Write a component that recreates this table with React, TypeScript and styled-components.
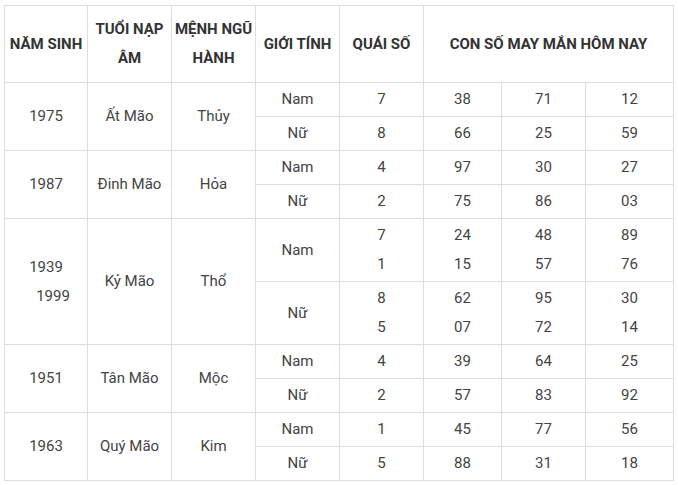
import React from "react";
import styled, { createGlobalStyle } from "styled-components";

const Global = createGlobalStyle`
  html, body { margin: 0; padding: 0; background: #fff; }
  body { font-family: Roboto, "Noto Sans", sans-serif; }
`;

const Wrap = styled.div`
  padding: 5px 0 0 4px;
`;

const Table = styled.table`
  border-collapse: collapse;
  table-layout: fixed;
  width: 669px;
  font-size: 15px;
  line-height: 29px;
  color: #444;
`;

const Col = styled.col<{ $w: number }>`
  width: ${(p) => p.$w}px;
`;

const Row = styled.tr<{ $h: number }>`
  height: ${(p) => p.$h}px;
`;

const Head = styled.th`
  border: 1px solid #ddd;
  padding: 0;
  font-weight: 700;
  color: #333;
  text-align: center;
  vertical-align: middle;
`;

const Cell = styled.td`
  border: 1px solid #ddd;
  padding: 0;
  text-align: center;
  vertical-align: middle;
`;

const Shifted = styled.span`
  display: inline-block;
  padding-left: 14px;
`;

type Sub = { sex: string; q: string[]; n: string[][] };
type Item = { year: React.ReactNode; tuoi: string; menh: string; h: number; subs: Sub[] };

const data: Item[] = [
  {
    year: "1975", tuoi: "Ất Mão", menh: "Thủy", h: 34,
    subs: [
      { sex: "Nam", q: ["7"], n: [["38"], ["71"], ["12"]] },
      { sex: "Nữ", q: ["8"], n: [["66"], ["25"], ["59"]] },
    ],
  },
  {
    year: "1987", tuoi: "Đinh Mão", menh: "Hỏa", h: 34,
    subs: [
      { sex: "Nam", q: ["4"], n: [["97"], ["30"], ["27"]] },
      { sex: "Nữ", q: ["2"], n: [["75"], ["86"], ["03"]] },
    ],
  },
  {
    year: (
      <>
        1939
        <br />
        <Shifted>1999</Shifted>
      </>
    ),
    tuoi: "Kỷ Mão", menh: "Thổ", h: 63,
    subs: [
      { sex: "Nam", q: ["7", "1"], n: [["24", "15"], ["48", "57"], ["89", "76"]] },
      { sex: "Nữ", q: ["8", "5"], n: [["62", "07"], ["95", "72"], ["30", "14"]] },
    ],
  },
  {
    year: "1951", tuoi: "Tân Mão", menh: "Mộc", h: 34,
    subs: [
      { sex: "Nam", q: ["4"], n: [["39"], ["64"], ["25"]] },
      { sex: "Nữ", q: ["2"], n: [["57"], ["83"], ["92"]] },
    ],
  },
  {
    year: "1963", tuoi: "Quý Mão", menh: "Kim", h: 34,
    subs: [
      { sex: "Nam", q: ["1"], n: [["45"], ["77"], ["56"]] },
      { sex: "Nữ", q: ["5"], n: [["88"], ["31"], ["18"]] },
    ],
  },
];

const Lines = ({ items }: { items: string[] }) => (
  <>
    {items.map((t, i) => (
      <React.Fragment key={i}>
        {i > 0 && <br />}
        {t}
      </React.Fragment>
    ))}
  </>
);

export default function App() {
  return (
    <Wrap>
      <Global />
      <Table>
        <colgroup>
          <Col $w={83} />
          <Col $w={84} />
          <Col $w={84} />
          <Col $w={84} />
          <Col $w={84} />
          <Col $w={78} />
          <Col $w={84} />
          <Col $w={88} />
        </colgroup>
        <thead>
          <Row $h={77}>
            <Head>NĂM SINH</Head>
            <Head>
              TUỔI NẠP
              <br />
              ÂM
            </Head>
            <Head>
              MỆNH NGŨ
              <br />
              HÀNH
            </Head>
            <Head>GIỚI TÍNH</Head>
            <Head>QUÁI SỐ</Head>
            <Head colSpan={3}>CON SỐ MAY MẮN HÔM NAY</Head>
          </Row>
        </thead>
        <tbody>
          {data.map((item, i) =>
            item.subs.map((s, j) => (
              <Row $h={item.h} key={`${i}-${j}`}>
                {j === 0 && (
                  <>
                    <Cell rowSpan={2}>{item.year}</Cell>
                    <Cell rowSpan={2}>{item.tuoi}</Cell>
                    <Cell rowSpan={2}>{item.menh}</Cell>
                  </>
                )}
                <Cell>{s.sex}</Cell>
                <Cell>
                  <Lines items={s.q} />
                </Cell>
                {s.n.map((col, k) => (
                  <Cell key={k}>
                    <Lines items={col} />
                  </Cell>
                ))}
              </Row>
            ))
          )}
        </tbody>
      </Table>
    </Wrap>
  );
}
